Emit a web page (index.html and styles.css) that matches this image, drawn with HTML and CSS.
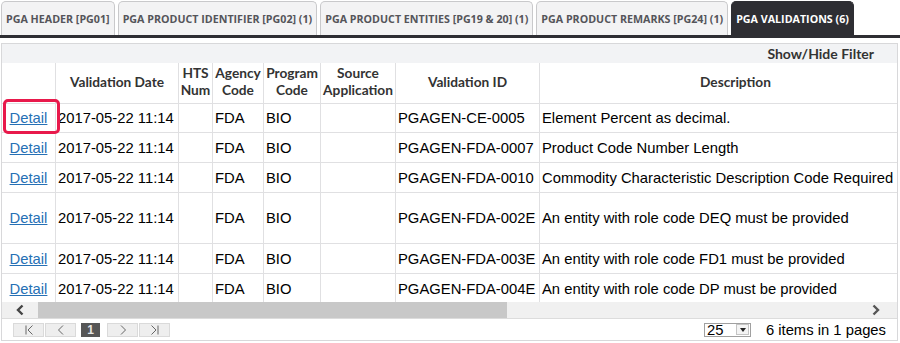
FILE: index.html
```html
<!DOCTYPE html>
<html>
  <head>
    <meta charset="UTF-8">
    <title>PGA Validations</title>
    <link rel="stylesheet" href="styles.css">
  </head>
  <body>
    <div class="tabs">
      <div class="tab">PGA HEADER [PG01]</div>
      <div class="tab">PGA PRODUCT IDENTIFIER [PG02] (1)</div>
      <div class="tab">PGA PRODUCT ENTITIES [PG19 &amp; 20] (1)</div>
      <div class="tab">PGA PRODUCT REMARKS [PG24] (1)</div>
      <div class="tab active">PGA VALIDATIONS (6)</div>
    </div>

    <div class="grid">
      <div class="toolbar"><span>Show/Hide Filter</span></div>

      <div class="grid-body">
        <table>
          <thead>
            <tr class="head-row">
              <th class="c-detail"></th>
              <th class="c-date">Validation Date</th>
              <th class="c-hts">HTS Num</th>
              <th class="c-agency">Agency Code</th>
              <th class="c-program">Program Code</th>
              <th class="c-source">Source Application</th>
              <th class="c-id">Validation ID</th>
              <th class="c-desc">Description</th>
            </tr>
          </thead>
          <tbody>
            <tr class="row-first">
              <td class="detail"><a href="#">Detail</a></td>
              <td>2017-05-22 11:14</td><td></td><td>FDA</td><td>BIO</td><td></td>
              <td>PGAGEN-CE-0005</td><td>Element Percent as decimal.</td>
            </tr>
            <tr>
              <td class="detail"><a href="#">Detail</a></td>
              <td>2017-05-22 11:14</td><td></td><td>FDA</td><td>BIO</td><td></td>
              <td>PGAGEN-FDA-0007</td><td>Product Code Number Length</td>
            </tr>
            <tr>
              <td class="detail"><a href="#">Detail</a></td>
              <td>2017-05-22 11:14</td><td></td><td>FDA</td><td>BIO</td><td></td>
              <td>PGAGEN-FDA-0010</td><td>Commodity Characteristic Description Code Required</td>
            </tr>
            <tr class="row-tall">
              <td class="detail"><a href="#">Detail</a></td>
              <td>2017-05-22 11:14</td><td></td><td>FDA</td><td>BIO</td><td></td>
              <td>PGAGEN-FDA-002E</td><td>An entity with role code DEQ must be provided</td>
            </tr>
            <tr>
              <td class="detail"><a href="#">Detail</a></td>
              <td>2017-05-22 11:14</td><td></td><td>FDA</td><td>BIO</td><td></td>
              <td>PGAGEN-FDA-003E</td><td>An entity with role code FD1 must be provided</td>
            </tr>
            <tr>
              <td class="detail"><a href="#">Detail</a></td>
              <td>2017-05-22 11:14</td><td></td><td>FDA</td><td>BIO</td><td></td>
              <td>PGAGEN-FDA-004E</td><td>An entity with role code DP must be provided</td>
            </tr>
          </tbody>
        </table>
        <!-- focus outline on the first Detail link -->
        <div class="focus-ring"></div>
      </div>

      <div class="hscroll">
        <span class="arrow">
          <svg width="12" height="12" viewBox="0 0 12 12"><path d="M8.5 1.5L4 6l4.5 4.5" stroke="#444" stroke-width="2.4" fill="none"/></svg>
        </span>
        <div class="track"><div class="thumb"></div></div>
        <span class="arrow">
          <svg width="12" height="12" viewBox="0 0 12 12"><path d="M3.5 1.5L8 6l-4.5 4.5" stroke="#555" stroke-width="2.4" fill="none"/></svg>
        </span>
      </div>

      <div class="pager">
        <div class="pages">
          <span class="pbtn"><svg width="12" height="12" viewBox="0 0 12 12"><path d="M3 1.5v9M9.5 1.5L5 6l4.5 4.5" stroke="#666" fill="none"/></svg></span>
          <span class="pbtn"><svg width="12" height="12" viewBox="0 0 12 12"><path d="M8 1.5L3.5 6 8 10.5" stroke="#666" fill="none"/></svg></span>
          <span class="pcur">1</span>
          <span class="pbtn"><svg width="12" height="12" viewBox="0 0 12 12"><path d="M4 1.5L8.5 6 4 10.5" stroke="#666" fill="none"/></svg></span>
          <span class="pbtn"><svg width="12" height="12" viewBox="0 0 12 12"><path d="M2.5 1.5L7 6l-4.5 4.5M9 1.5v9" stroke="#666" fill="none"/></svg></span>
        </div>
        <div class="pinfo">
          <div class="psize"><span>25</span><span class="drop"></span></div>
          <span>6 items in 1 pages</span>
        </div>
      </div>
    </div>
  </body>
</html>
```

FILE: styles.css
```css
*{
  box-sizing: border-box;
}
html, body{
  margin: 0;
  padding: 0;
  background: #fff;
}
body{
  width: 900px;
  font-family: "Liberation Sans", Arial, sans-serif;
}

/* tab strip */
.tabs{
  display: flex;
  align-items: flex-end;
  gap: 3px;
  height: 38px;
  padding: 1px 0 0 1px;
  border-bottom: 3px solid #2e2e33;
}
.tab{
  display: flex;
  align-items: center;
  height: 34px;
  padding: 0 4px;
  background: #f3f3f4;
  border: 1px solid #c9c9cb;
  border-bottom: none;
  border-radius: 5px 5px 0 0;
  font-family: "Open Sans", sans-serif;
  font-weight: 700;
  font-size: 10.7px;
  color: #55555a;
  white-space: nowrap;
}
.tab.active{
  background: #2e2e33;
  border-color: #2e2e33;
  color: #fff;
}

/* grid */
.grid{
  margin: 5px 0 0 1px;
  width: 897px;
  border: 1px solid #d8d8da;
}
.toolbar{
  display: flex;
  justify-content: flex-end;
  align-items: center;
  height: 19px;
  padding-right: 23px;
  background: #f2f3f5;
  font-family: Lato, sans-serif;
  font-weight: 700;
  font-size: 14px;
  color: #333;
}
.grid-body{
  position: relative;
  height: 239px;
  overflow: hidden;
}
table{
  table-layout: fixed;
  border-collapse: separate;
  border-spacing: 0;
  width: 930px;
}
th, td{
  border-right: 1px solid #e0e0e2;
  border-bottom: 1px solid #e0e0e2;
  padding: 0 2px;
  white-space: nowrap;
  overflow: hidden;
}
th{
  font-family: Lato, sans-serif;
  font-weight: 700;
  font-size: 13.7px;
  line-height: 17px;
  color: #333;
  text-align: center;
  vertical-align: middle;
  white-space: normal;
  padding: 0 1px 4px;
}
.head-row{
  height: 41px;
}
.c-detail{ width: 54px; }
.c-date{ width: 123px; }
.c-hts{ width: 34px; }
.c-agency{ width: 51px; }
.c-program{ width: 57px; }
.c-source{ width: 75px; }
.c-id{ width: 144px; }
.c-desc{ width: 392px; }

td{
  font-size: 14.8px;
  color: #000;
  height: 30px;
  vertical-align: middle;
}
.row-first td{
  height: 29px;
}
.row-tall td{
  height: 51px;
}
td.detail{
  text-align: center;
  padding: 0;
}
td.detail a{
  color: #2670b5;
  text-decoration: underline;
}
.focus-ring{
  position: absolute;
  left: 1px;
  top: 36px;
  width: 57px;
  height: 35px;
  border: 3px solid #e8194b;
  border-radius: 5px;
}

/* horizontal scroller */
.hscroll{
  display: flex;
  align-items: center;
  height: 17px;
  background: #f0f0f0;
  border-bottom: 1px solid #dcdcdc;
}
.hscroll .arrow{
  display: flex;
  justify-content: center;
  width: 36px;
}
.hscroll .arrow:last-child{
  width: 42px;
}
.hscroll .track{
  flex: 1;
  height: 16px;
  align-self: flex-end;
}
.hscroll .thumb{
  width: 469px;
  height: 16px;
  background: #c8c8c8;
}

/* pager */
.pager{
  display: flex;
  justify-content: space-between;
  align-items: center;
  height: 21px;
  padding: 0 11px 0 11px;
}
.pages{
  display: flex;
  align-items: center;
}
.pbtn{
  display: flex;
  justify-content: center;
  align-items: center;
  width: 31px;
  height: 14px;
  margin-right: 1px;
  background: #eeeeee;
  border: 1px solid #dadada;
}
.pcur{
  display: flex;
  justify-content: center;
  align-items: center;
  width: 19px;
  height: 14px;
  margin: 0 7px 0 4px;
  background: #565656;
  color: #e6e6e6;
  font-size: 12px;
  font-weight: 700;
}
.pinfo{
  display: flex;
  align-items: center;
  gap: 15px;
  font-size: 14.8px;
  color: #000;
}
.psize{
  display: flex;
  justify-content: space-between;
  align-items: center;
  width: 47px;
  height: 14px;
  padding: 0 1px 0 2px;
  border: 1px solid #a0a0a0;
  line-height: 12px;
}
.drop{
  width: 13px;
  height: 11px;
  border: 1px solid #c4c4c4;
  background: #f4f4f4;
  position: relative;
}
.drop::after{
  content: "";
  position: absolute;
  left: 3px;
  top: 3px;
  border-left: 3px solid transparent;
  border-right: 3px solid transparent;
  border-top: 4px solid #222;
}
```
